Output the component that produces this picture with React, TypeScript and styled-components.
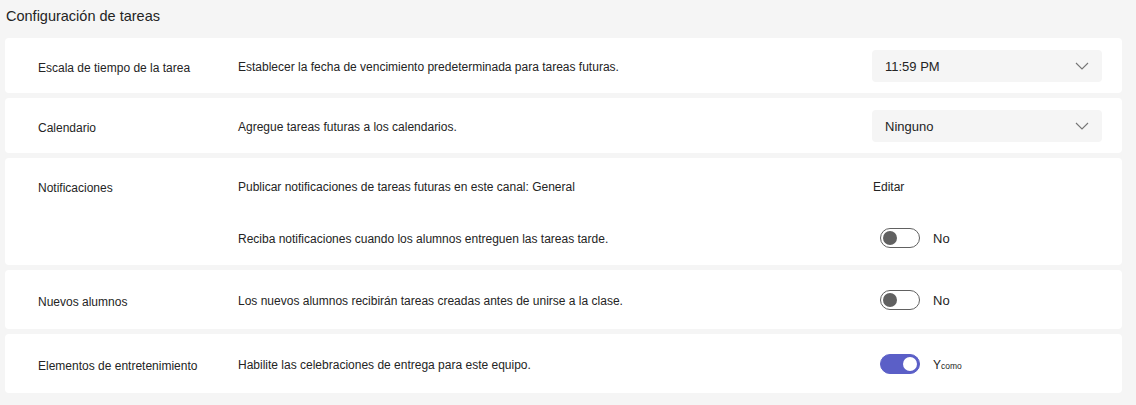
import React from 'react';
import styled, { createGlobalStyle } from 'styled-components';

const GlobalStyle = createGlobalStyle`
  body {
    margin: 0;
    background: #f5f5f5;
    font-family: "Liberation Sans", Arial, sans-serif;
    color: #242424;
  }
`;

const Page = styled.div`
  padding: 0 14px 0 5px;
`;

const Heading = styled.h2`
  margin: 0 0 12px 1px;
  padding-top: 6px;
  font-size: 14.5px;
  line-height: 20px;
  font-weight: 400;
`;

const List = styled.div`
  display: flex;
  flex-direction: column;
  gap: 5px;
`;

const Card = styled.section<{ $tall?: boolean }>`
  background: #fff;
  border-radius: 4px;
  padding: 6px 20px 5px 33px;
  display: grid;
  grid-template-columns: 200px 1fr;
  --row-h: ${(p) => (p.$tall ? '48px' : '44px')};
`;

const Label = styled.div`
  height: var(--row-h);
  display: flex;
  align-items: center;
  padding-top: 3px;
  box-sizing: border-box;
  font-size: 12px;
`;

const Rows = styled.div`
  display: flex;
  flex-direction: column;
  gap: 8px;
`;

const Row = styled.div`
  min-height: var(--row-h);
  display: grid;
  grid-template-columns: 1fr 230px;
  align-items: center;
`;

const Desc = styled.div`
  font-size: 12px;
  padding-top: 2px;
`;

const Select = styled.div`
  height: 32px;
  background: #f5f5f5;
  border-radius: 4px;
  display: flex;
  align-items: center;
  justify-content: space-between;
  padding: 0 13px 0 13px;
  font-size: 13px;
`;

const Control = styled.div`
  display: flex;
  align-items: center;
  gap: 13px;
  padding-left: 8px;
  font-size: 13px;
`;

const EditLink = styled.div`
  padding-left: 1px;
  padding-top: 2px;
  font-size: 12px;
`;

const Track = styled.div<{ $on?: boolean }>`
  width: 40px;
  height: 20px;
  box-sizing: border-box;
  border-radius: 10px;
  border: 1px solid ${(p) => (p.$on ? '#5b5fc7' : '#616161')};
  background: ${(p) => (p.$on ? '#5b5fc7' : '#fff')};
  display: flex;
  align-items: center;
  justify-content: ${(p) => (p.$on ? 'flex-end' : 'flex-start')};
  padding: 0 2px;
`;

const Knob = styled.div<{ $on?: boolean }>`
  width: 14px;
  height: 14px;
  border-radius: 50%;
  background: ${(p) => (p.$on ? '#fff' : '#616161')};
`;

const Big = styled.span`
  font-size: 12px;
`;

const Small = styled.span`
  font-size: 8.5px;
`;

const Chevron = () => (
  <svg width="14" height="8" viewBox="0 0 14 8" fill="none">
    <path d="M1 1l6 6 6-6" stroke="#757575" strokeWidth="1.1" />
  </svg>
);

const Toggle: React.FC<{ on?: boolean; children: React.ReactNode }> = ({ on, children }) => (
  <Control>
    <Track $on={on}>
      <Knob $on={on} />
    </Track>
    <span>{children}</span>
  </Control>
);

export default function App() {
  return (
    <>
      <GlobalStyle />
      <Page>
        <Heading>Configuración de tareas</Heading>
        <List>
          <Card>
            <Label>Escala de tiempo de la tarea</Label>
            <Rows>
              <Row>
                <Desc>Establecer la fecha de vencimiento predeterminada para tareas futuras.</Desc>
                <Select>
                  <span>11:59 PM</span>
                  <Chevron />
                </Select>
              </Row>
            </Rows>
          </Card>
          <Card>
            <Label>Calendario</Label>
            <Rows>
              <Row>
                <Desc>Agregue tareas futuras a los calendarios.</Desc>
                <Select>
                  <span>Ninguno</span>
                  <Chevron />
                </Select>
              </Row>
            </Rows>
          </Card>
          <Card>
            <Label>Notificaciones</Label>
            <Rows>
              <Row>
                <Desc>Publicar notificaciones de tareas futuras en este canal: General</Desc>
                <EditLink>Editar</EditLink>
              </Row>
              <Row>
                <Desc>Reciba notificaciones cuando los alumnos entreguen las tareas tarde.</Desc>
                <Toggle>No</Toggle>
              </Row>
            </Rows>
          </Card>
          <Card $tall>
            <Label>Nuevos alumnos</Label>
            <Rows>
              <Row>
                <Desc>Los nuevos alumnos recibirán tareas creadas antes de unirse a la clase.</Desc>
                <Toggle>No</Toggle>
              </Row>
            </Rows>
          </Card>
          <Card $tall>
            <Label>Elementos de entretenimiento</Label>
            <Rows>
              <Row>
                <Desc>Habilite las celebraciones de entrega para este equipo.</Desc>
                <Toggle on>
                  <Big>Y</Big>
                  <Small>como</Small>
                </Toggle>
              </Row>
            </Rows>
          </Card>
        </List>
      </Page>
    </>
  );
}
